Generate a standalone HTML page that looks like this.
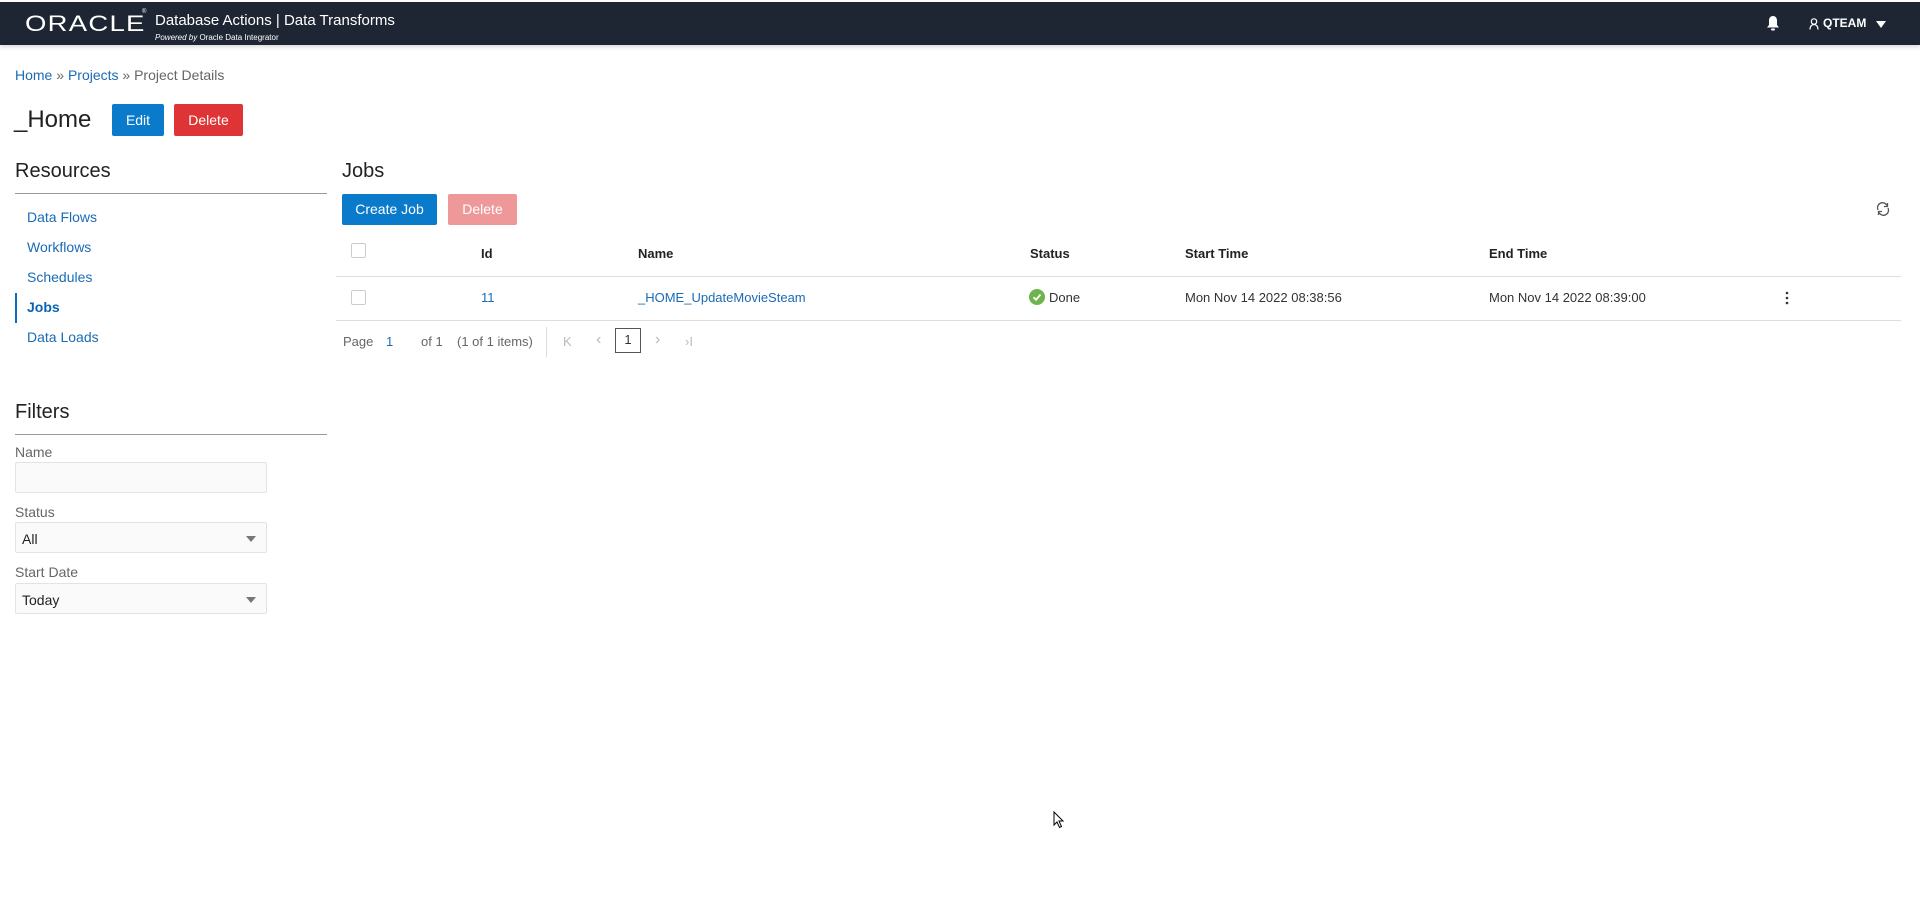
<!DOCTYPE html>
<html><head><meta charset="utf-8"><style>
*{box-sizing:border-box;margin:0;padding:0}
body{width:1920px;height:913px;background:#fff;font-family:"Liberation Sans",Arial,sans-serif;color:#333;position:relative;overflow:hidden}
.a{position:absolute;white-space:nowrap}
.hdr{position:absolute;left:0;top:2px;width:1920px;height:43px;background:#1e2633;box-shadow:0 2px 4px rgba(0,0,0,.15)}
.link{color:#1a6bb5}
.btn{position:absolute;color:#fff;font-size:14px;text-align:center;border-radius:2px}
.nav{position:absolute;left:27px;font-size:14px;color:#1a6bb5}
.th{position:absolute;top:246px;font-size:13px;font-weight:bold;color:#222}
.td{position:absolute;top:290px;font-size:13px;color:#333}
.cb{position:absolute;left:351px;width:15px;height:15px;border:1px solid #ccc;border-radius:2px;background:#fff}
.lbl{position:absolute;left:15px;font-size:14px;color:#666}
.inp{position:absolute;left:15px;width:252px;height:31px;border:1px solid #e3e3e3;background:#fafafa;border-radius:2px;font-size:14px;color:#222;padding:8px 6px}
.caret{position:absolute;right:10px;top:13px;width:0;height:0;border-left:5px solid transparent;border-right:5px solid transparent;border-top:6px solid #777}
.pg{position:absolute;top:334px;font-size:13px;color:#666}
</style></head><body>
<div class="hdr">
 <div class="a" style="left:25px;top:9px;font-size:22px;color:#fff;letter-spacing:1px;transform:scaleX(1.25);transform-origin:left;font-weight:normal">ORACLE</div>
 <div class="a" style="left:142px;top:7px;font-size:6px;color:#fff">®</div>
 <div class="a" style="left:155px;top:10px;font-size:15px;color:#fff">Database Actions | Data Transforms</div>
 <div class="a" style="left:155px;top:31px;font-size:8px;color:#fff"><i>Powered by</i> Oracle Data Integrator</div>
 <svg class="a" style="left:1766px;top:13px" width="14" height="16" viewBox="0 0 14 16"><path d="M7 1C4.5 1 3 3 3 5.5V10L1 12.5H13L11 10V5.5C11 3 9.5 1 7 1Z" fill="#fff"/><rect x="5" y="13.5" width="4" height="2" rx="1" fill="#fff"/></svg>
 <svg class="a" style="left:1809px;top:16px" width="10" height="12" viewBox="0 0 10 12"><circle cx="5" cy="3.5" r="2.7" fill="none" stroke="#fff" stroke-width="1.2"/><path d="M1 11.5C1 8 3 6.5 5 6.5S9 8 9 11.5" fill="none" stroke="#fff" stroke-width="1.2"/></svg>
 <div class="a" style="left:1823px;top:14px;font-size:12px;font-weight:bold;color:#fff">QTEAM</div>
 <div class="a" style="left:1876px;top:19px;width:0;height:0;border-left:5px solid transparent;border-right:5px solid transparent;border-top:7px solid #fff"></div>
</div>

<div class="a" style="left:15px;top:67px;font-size:14px"><span class="link">Home</span> <span style="color:#666">»</span> <span class="link">Projects</span> <span style="color:#666">» Project Details</span></div>
<div class="a" style="left:14px;top:106px;font-size:24px;color:#222">_Home</div>
<div class="btn" style="left:112px;top:104px;width:52px;height:32px;line-height:32px;background:#0a7acb">Edit</div>
<div class="btn" style="left:174px;top:104px;width:69px;height:32px;line-height:32px;background:#df3435">Delete</div>

<div class="a" style="left:15px;top:160px;font-size:20px;color:#222">Resources</div>
<div class="a" style="left:15px;top:193px;width:312px;height:1px;background:#999"></div>
<div class="nav" style="top:209px">Data Flows</div>
<div class="nav" style="top:239px">Workflows</div>
<div class="nav" style="top:269px">Schedules</div>
<div class="a" style="left:15px;top:293px;width:2px;height:30px;background:#0a6fc2"></div>
<div class="nav" style="top:299px;font-weight:bold;color:#0a64b5">Jobs</div>
<div class="nav" style="top:329px">Data Loads</div>

<div class="a" style="left:15px;top:401px;font-size:20px;color:#222">Filters</div>
<div class="a" style="left:15px;top:434px;width:312px;height:1px;background:#999"></div>
<div class="lbl" style="top:444px">Name</div>
<div class="inp" style="top:462px"></div>
<div class="lbl" style="top:504px">Status</div>
<div class="inp" style="top:522px">All<div class="caret"></div></div>
<div class="lbl" style="top:564px">Start Date</div>
<div class="inp" style="top:583px">Today<div class="caret"></div></div>

<div class="a" style="left:342px;top:160px;font-size:20px;color:#222">Jobs</div>
<div class="btn" style="left:342px;top:194px;width:95px;height:31px;line-height:31px;background:#0a7acb">Create Job</div>
<div class="btn" style="left:448px;top:194px;width:69px;height:31px;line-height:31px;background:#ee9899">Delete</div>
<svg class="a" style="left:1875px;top:201px" width="16" height="16" viewBox="0 0 16 16"><path d="M3 9A5 5 0 0 1 12 4.5M13 7A5 5 0 0 1 4 11.5" fill="none" stroke="#555" stroke-width="1.3"/><path d="M12.5 2V5.5H9" fill="none" stroke="#555" stroke-width="1.3"/><path d="M3.5 14V10.5H7" fill="none" stroke="#555" stroke-width="1.3"/></svg>

<div class="cb" style="top:243px"></div>
<div class="th" style="left:481px">Id</div>
<div class="th" style="left:638px">Name</div>
<div class="th" style="left:1030px">Status</div>
<div class="th" style="left:1185px">Start Time</div>
<div class="th" style="left:1489px">End Time</div>
<div class="a" style="left:336px;top:276px;width:1565px;height:1px;background:#ddd"></div>
<div class="cb" style="top:290px"></div>
<div class="td" style="left:481px;color:#1a6bb5">11</div>
<div class="td" style="left:638px;color:#1a6bb5">_HOME_UpdateMovieSteam</div>
<svg class="a" style="left:1029px;top:289px" width="16" height="16" viewBox="0 0 16 16"><circle cx="8" cy="8" r="8" fill="#6fb34f"/><path d="M4.5 8.3L7 10.8L11.5 5.5" fill="none" stroke="#fff" stroke-width="1.8"/></svg>
<div class="td" style="left:1049px">Done</div>
<div class="td" style="left:1185px">Mon Nov 14 2022 08:38:56</div>
<div class="td" style="left:1489px">Mon Nov 14 2022 08:39:00</div>
<svg class="a" style="left:1785px;top:291px" width="4" height="14" viewBox="0 0 4 14"><circle cx="2" cy="2" r="1.3" fill="#333"/><circle cx="2" cy="7" r="1.3" fill="#333"/><circle cx="2" cy="12" r="1.3" fill="#333"/></svg>
<div class="a" style="left:336px;top:320px;width:1565px;height:1px;background:#ddd"></div>

<div class="pg" style="left:343px">Page</div>
<div class="pg" style="left:386px;color:#1a6bb5">1</div>
<div class="pg" style="left:421px">of 1</div>
<div class="pg" style="left:457px">(1 of 1 items)</div>
<div class="a" style="left:546px;top:327px;width:1px;height:30px;background:#ddd"></div>
<div class="pg" style="left:563px;color:#bbb">K</div>
<div class="pg" style="left:596px;color:#bbb;font-size:16px;top:331px">‹</div>
<div class="a" style="left:615px;top:328px;width:26px;height:25px;border:1px solid #555;font-size:13px;text-align:center;line-height:22px;color:#333">1</div>
<div class="pg" style="left:655px;color:#bbb;font-size:16px;top:331px">›</div>
<div class="pg" style="left:685px;color:#bbb">›I</div>

<svg class="a" style="left:1053px;top:811px" width="12" height="18" viewBox="0 0 12 18"><path d="M1 1V14L4 11L6.5 16.5L8.5 15.5L6 10H10Z" fill="#fff" stroke="#000" stroke-width="1"/></svg>
</body></html>
